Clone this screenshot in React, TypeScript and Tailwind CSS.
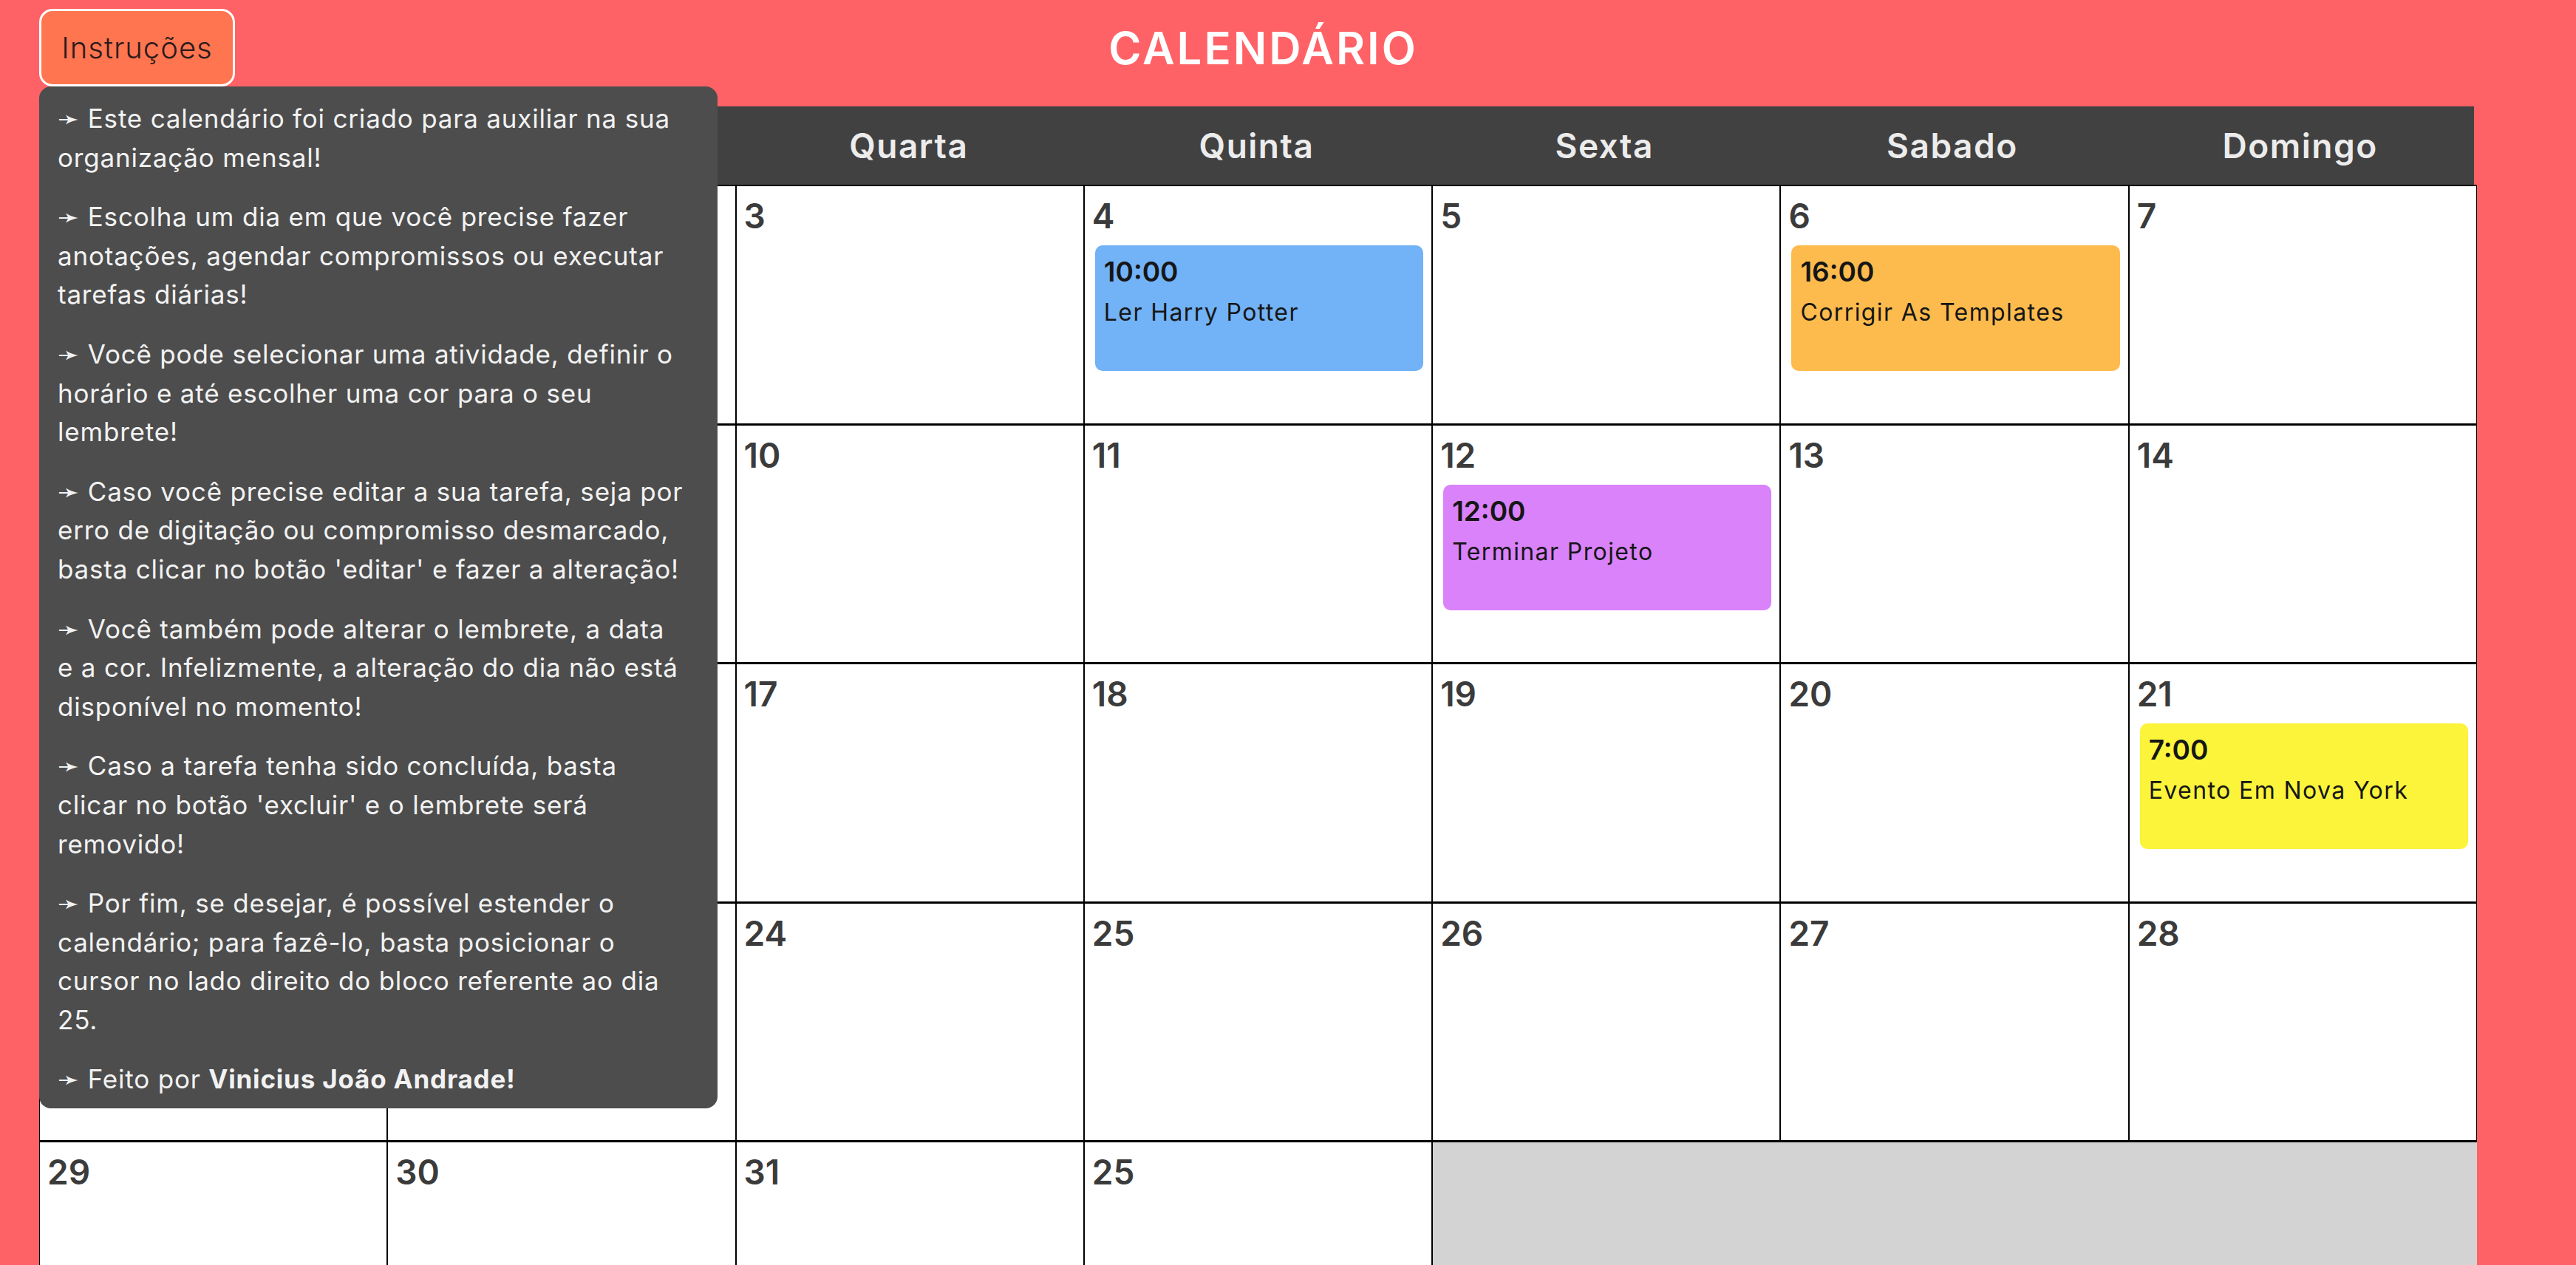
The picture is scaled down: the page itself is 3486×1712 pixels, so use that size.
const weekDays = ["Segunda", "Terça", "Quarta", "Quinta", "Sexta", "Sabado", "Domingo"];

type Reminder = { time: string; title: string; color: string };

const reminders: Record<string, Reminder> = {
  "4": { time: "10:00", title: "Ler Harry Potter", color: "bg-[#72b2f6]" },
  "6": { time: "16:00", title: "Corrigir As Templates", color: "bg-[#fdbb4d]" },
  "12": { time: "12:00", title: "Terminar Projeto", color: "bg-[#d982fa]" },
  "21": { time: "7:00", title: "Evento Em Nova York", color: "bg-[#fbf43b]" },
};

const weeks = [
  ["1", "2", "3", "4", "5", "6", "7"],
  ["8", "9", "10", "11", "12", "13", "14"],
  ["15", "16", "17", "18", "19", "20", "21"],
  ["22", "23", "24", "25", "26", "27", "28"],
  ["29", "30", "31", "25"],
];

const instructions: string[][] = [
  ["➛ Este calendário foi criado para auxiliar na sua", "organização mensal!"],
  ["➛ Escolha um dia em que você precise fazer", "anotações, agendar compromissos ou executar", "tarefas diárias!"],
  ["➛ Você pode selecionar uma atividade, definir o", "horário e até escolher uma cor para o seu", "lembrete!"],
  [
    "➛ Caso você precise editar a sua tarefa, seja por",
    "erro de digitação ou compromisso desmarcado,",
    "basta clicar no botão 'editar' e fazer a alteração!",
  ],
  [
    "➛ Você também pode alterar o lembrete, a data",
    "e a cor. Infelizmente, a alteração do dia não está",
    "disponível no momento!",
  ],
  ["➛ Caso a tarefa tenha sido concluída, basta", "clicar no botão 'excluir' e o lembrete será", "removido!"],
  [
    "➛ Por fim, se desejar, é possível estender o",
    "calendário; para fazê-lo, basta posicionar o",
    "cursor no lado direito do bloco referente ao dia",
    "25.",
  ],
];

function DayCell({ day }: { day: string }) {
  const reminder = reminders[day];
  return (
    <div className="h-[323.5px] border-x border-t-2 border-b border-black bg-white pl-[10px] pr-[11px] pt-[12px]">
      <span className="block text-[46px] font-semibold leading-[56px] text-[#3b3b3b]">{day}</span>
      {reminder && (
        <div className={`ml-[4px] mt-[12px] h-[170px] rounded-[10px] px-[12px] pt-[10px] text-[#161616] ${reminder.color}`}>
          <p className="text-[37px] font-semibold leading-[52px]">{reminder.time}</p>
          <p className="mt-[7px] text-[32px] leading-[44px] tracking-[1.4px]">{reminder.title}</p>
        </div>
      )}
    </div>
  );
}

export default function App() {
  return (
    <div className="h-screen overflow-hidden bg-[#ff6266] font-['Inter','DejaVu_Sans',sans-serif]">
      <div className="ml-[53px] w-[3299px]">
        {/* ── Top bar ── */}
        <header className="grid h-[144px] grid-cols-[1fr_auto_1fr] items-start pt-[12px]">
          <div className="relative justify-self-start">
            <button className="flex h-[105px] w-[265px] items-center justify-center rounded-[18px] border-[3px] border-white bg-[#ff7550] text-[40px] font-light tracking-[1px] text-[#2a1c1c]">
              Instruções
            </button>

            {/* Instructions popover */}
            <div className="absolute left-0 top-full z-10 w-[918px] rounded-[16px] bg-[#4d4d4d] pb-[13px] pl-[25px] pt-[17px] text-[35px] leading-[52.6px] tracking-[0.8px] text-[#f2f2f2]">
              {instructions.map((lines, i) => (
                <p key={i} className="mb-[28px] whitespace-nowrap">
                  {lines.map((line, j) => (
                    <span key={j} className="block">
                      {line}
                    </span>
                  ))}
                </p>
              ))}
              <p className="whitespace-nowrap">
                ➛ Feito por <strong className="font-bold">Vinicius João Andrade!</strong>
              </p>
            </div>
          </div>

          <h1 className="flex h-[105px] items-center pl-[14px] text-[60px] font-semibold tracking-[3px] text-white">
            CALENDÁRIO
          </h1>
          <div />
        </header>

        {/* ── Week days ── */}
        <div className="grid h-[106px] w-[3295px] grid-cols-7 items-center bg-[#414141] text-center">
          {weekDays.map((name) => (
            <span key={name} className="text-[46px] font-semibold tracking-[1.5px] text-[#ececec]">
              {name}
            </span>
          ))}
        </div>

        {/* ── Month grid ── */}
        <div className="grid grid-cols-7">
          {weeks.flat().map((day, i) => (
            <DayCell key={i} day={day} />
          ))}
          <div className="col-span-3 h-[323.5px] border-l border-t-2 border-black bg-[#d3d3d3]" />
        </div>
      </div>
    </div>
  );
}
